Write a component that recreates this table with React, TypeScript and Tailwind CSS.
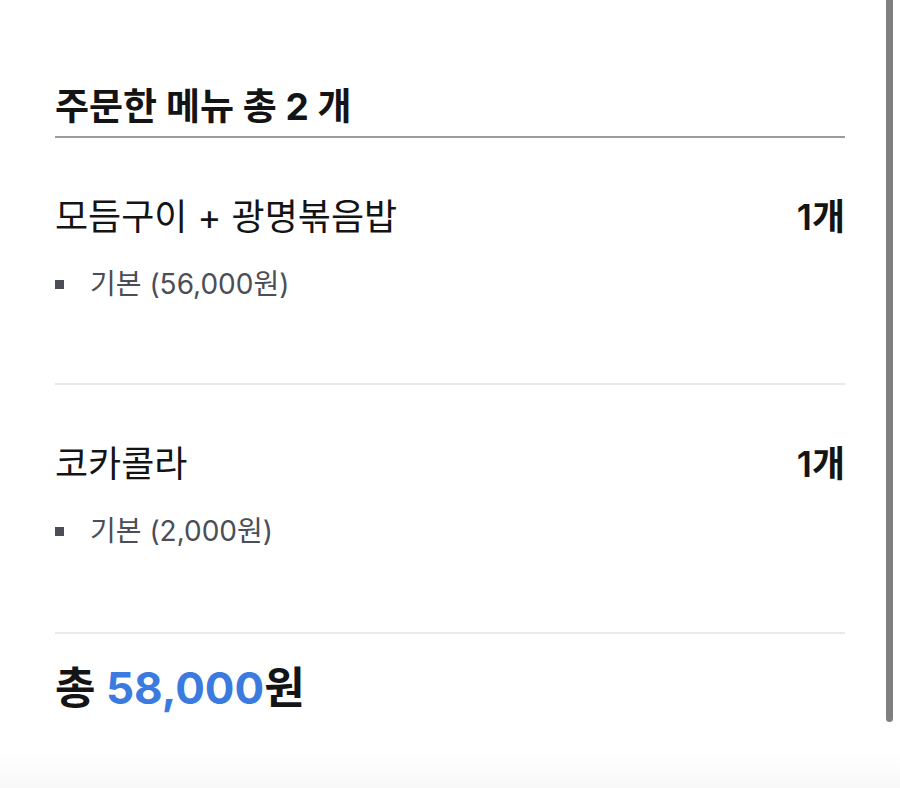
import React from "react";

type Item = {
	name: string;
	qty: number;
	option: string;
};

const items: Item[] = [
	{ name: "모듬구이 + 광명볶음밥", qty: 1, option: "기본 (56,000원)" },
	{ name: "코카콜라", qty: 1, option: "기본 (2,000원)" },
];

export default function App() {
	return (
		<div
			className="relative h-[788px] w-[900px] overflow-hidden bg-white text-[#141414]"
			style={{ fontFamily: 'Inter, "Noto Sans CJK KR", sans-serif' }}
		>
			<div className="px-[55px] pt-[88px]">
				<h2 className="border-b-2 border-[#9b9b9f] pb-[10px] text-[37px] font-bold leading-[38px]">
					주문한 메뉴 총 2 개
				</h2>

				{items.map((item, index) => (
					<div
						key={index}
						className={
							index === 0
								? "border-b-2 border-[#e9eaec] pt-[59px] pb-[83px]"
								: "border-b-2 border-[#e9eaec] pt-[59px] pb-[85px]"
						}
					>
						<div className="flex items-center justify-between">
							<span className="text-[36px] leading-[40px]">{item.name}</span>
							<span className="text-[36px] font-semibold leading-[40px]">
								{item.qty}개
							</span>
						</div>
						<div className="mt-[31px] flex items-center text-[28px] leading-[32px] text-[#4b4e56]">
							<span className="mr-[26px] size-[9px] bg-[#4b4e56]" />
							{item.option}
						</div>
					</div>
				))}

				<div className="pt-[31px] text-[44px] font-bold leading-[46px]">
					총 <span className="text-[#3b7be0]">58,000</span>원
				</div>
			</div>

			<div className="absolute top-0 left-[886px] h-[722px] w-[7px] rounded-b-full bg-[#7f7f7f]" />
			<div className="absolute bottom-0 left-0 h-[36px] w-full bg-gradient-to-b from-white to-[#f8f8f8]" />
		</div>
	);
}
